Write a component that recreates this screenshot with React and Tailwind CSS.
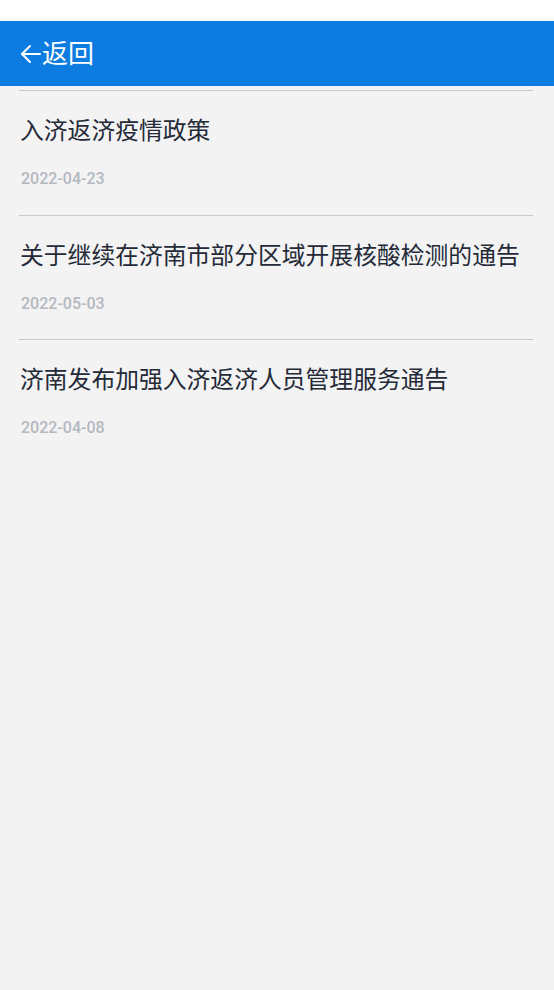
import React from 'react';

// 通告列表
const NOTICES = [
  { id: 1, title: '入济返济疫情政策', date: '2022-04-23' },
  { id: 2, title: '关于继续在济南市部分区域开展核酸检测的通告', date: '2022-05-03' },
  { id: 3, title: '济南发布加强入济返济人员管理服务通告', date: '2022-04-08' },
];

const cjk = { fontFamily: 'Roboto, "Noto Sans CJK SC", sans-serif' };

const App = () => {
  return (
    <div className="min-h-[990px] bg-[#f3f3f3]" style={cjk}>
      {/* status bar */}
      <div className="h-[21px] bg-white" />

      {/* header */}
      <div className="h-[65px] bg-[#0c7ce0] flex items-center pl-[20px] text-white">
        <svg width="21" height="20" viewBox="0 0 21 20" fill="none" stroke="currentColor" strokeWidth="2" strokeLinecap="round" strokeLinejoin="round">
          <path d="M20 10H2" />
          <path d="M10 2L2 10L10 18" />
        </svg>
        <span className="text-[26px] leading-none ml-[1px]">返回</span>
      </div>

      {/* list */}
      <div className="pl-[19px] pr-[21px] pt-[4px]">
        {NOTICES.map(n => (
          <div key={n.id} className="border-t border-[#c9c9cb] pt-[24px] pb-[23.5px] pl-[1px]">
            <div className="text-[23.8px] leading-8 text-[#252a38]">{n.title}</div>
            <div className="mt-[20px] text-[16px] leading-6 font-medium text-[#b4b8bf] pl-[1px]">{n.date}</div>
          </div>
        ))}
      </div>
    </div>
  );
};

export default App;
